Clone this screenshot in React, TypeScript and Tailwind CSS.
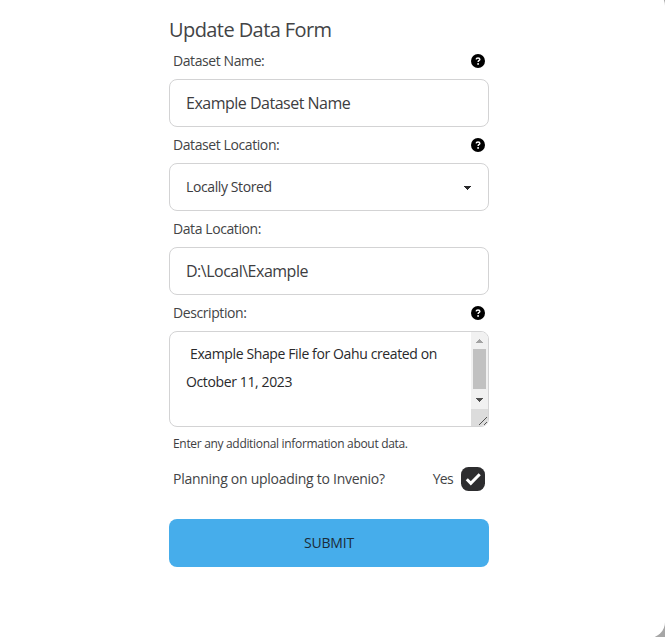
import React from "react";

const HelpIcon = () => (
  <svg className="size-3.5" viewBox="0 0 14 14" aria-label="Help">
    <circle cx="7" cy="7" r="7" fill="#000" />
    <path d="M5.100 5.300C5.300 4.300 6 4 7 4c1.100 0 1.900.5 1.900 1.400C8.900 6.500 7.100 6.400 7.100 8" fill="none" stroke="#fff" strokeWidth="1.400" />
    <circle cx="7.100" cy="9.900" r=".95" fill="#fff" />
  </svg>
);

function Label({ children, help = false }: { children: string; help?: boolean }) {
  return (
    <div className="flex h-9 items-center justify-between px-1">
      <label className="text-sm leading-5 tracking-[-0.41px] text-[#434446]">{children}</label>
      {help && <HelpIcon />}
    </div>
  );
}

const field = "flex h-12 w-full items-center rounded-lg border border-[#d3d3d4] bg-white px-4 outline-none";

export default function App() {
  return (
    <div className="h-[637px] w-full overflow-hidden bg-[#a6a6a6] font-['Open_Sans','Noto_Sans',sans-serif] text-[#3d3d3f]">
      <div className="-mt-2.5 h-[648px] w-full rounded-r-2xl bg-white pt-[26px]">
        <form className="ml-[169px] w-80" onSubmit={(e) => e.preventDefault()}>
          <h1 className="h-[27px] whitespace-nowrap text-xl leading-7 tracking-[-0.58px] text-[#434446]">Update Data Form</h1>
          <Label help>Dataset Name:</Label>
          <input className={`${field} text-base tracking-[-0.5px]`} defaultValue="Example Dataset Name" />
          <Label help>Dataset Location:</Label>
          <div className={`${field} justify-between text-sm tracking-[-0.39px]`}>
            <span>Locally Stored</span>
            <svg className="mr-px mt-px h-1 w-[7px]" viewBox="0 0 7 4" fill="#29292b" shapeRendering="crispEdges">
              <path d="M0 0h7v1H6v1H5v1H4v1H3V3H2V2H1V1H0z" />
            </svg>
          </div>
          <Label>Data Location:</Label>
          <input className={`${field} text-base tracking-[-0.5px]`} defaultValue="D:\Local\Example" />
          <Label help>Description:</Label>
          <div className="flex h-24 overflow-hidden rounded-lg border border-[#d3d3d4]">
            <div className="flex-1 whitespace-pre pl-4 pt-2 text-sm leading-7 tracking-[-0.38px] text-[#29292b]">
              <div className="pl-1">Example Shape File for Oahu created on</div>
              <div>October 11, 2023</div>
            </div>
            <div className="flex w-[17px] flex-col bg-[#f1f1f1]">
              <svg className="h-[77px] w-[17px]" viewBox="0 0 17 77" shapeRendering="crispEdges">
                <path d="M8 7h1v1h1v1h1v1h1v1H5v-1h1V9h1V8h1z" fill="#a3a3a3" />
                <path d="M2 17h13v40H2z" fill="#c1c1c1" />
                <path d="M5 66h7v1h-1v1h-1v1H9v1H8v-1H7v-1H6v-1H5z" fill="#505050" />
              </svg>
              <svg className="h-[17px] w-[17px] bg-[#dcdcdc]" viewBox="0 0 17 17" fill="none" stroke="#505050">
                <path d="M8 16l8-8M13 16l3-3" />
              </svg>
            </div>
          </div>
          <div className="flex h-8 items-center px-1 pt-0.5 text-xs leading-4 tracking-[-0.32px]">Enter any additional information about data.</div>
          <label className="flex h-10 items-center px-1 text-sm text-[#434446]">
            <span className="tracking-[-0.27px]">Planning on uploading to Invenio?</span>
            <span className="ml-auto mr-2 tracking-[-0.7px]">Yes</span>
            <svg className="size-6" viewBox="0 0 24 24">
              <rect width="24" height="24" rx="7.500" fill="#2d2d2f" />
              <path d="M5.800 12.300l4 4 8.900-9" fill="none" stroke="#fff" strokeWidth="3" />
            </svg>
          </label>
          <button className="mt-5 flex h-12 w-full items-center justify-center rounded-lg bg-[#46adeb] text-sm font-medium tracking-[-0.2px] text-[#1c2c38]">SUBMIT</button>
        </form>
      </div>
    </div>
  );
}
